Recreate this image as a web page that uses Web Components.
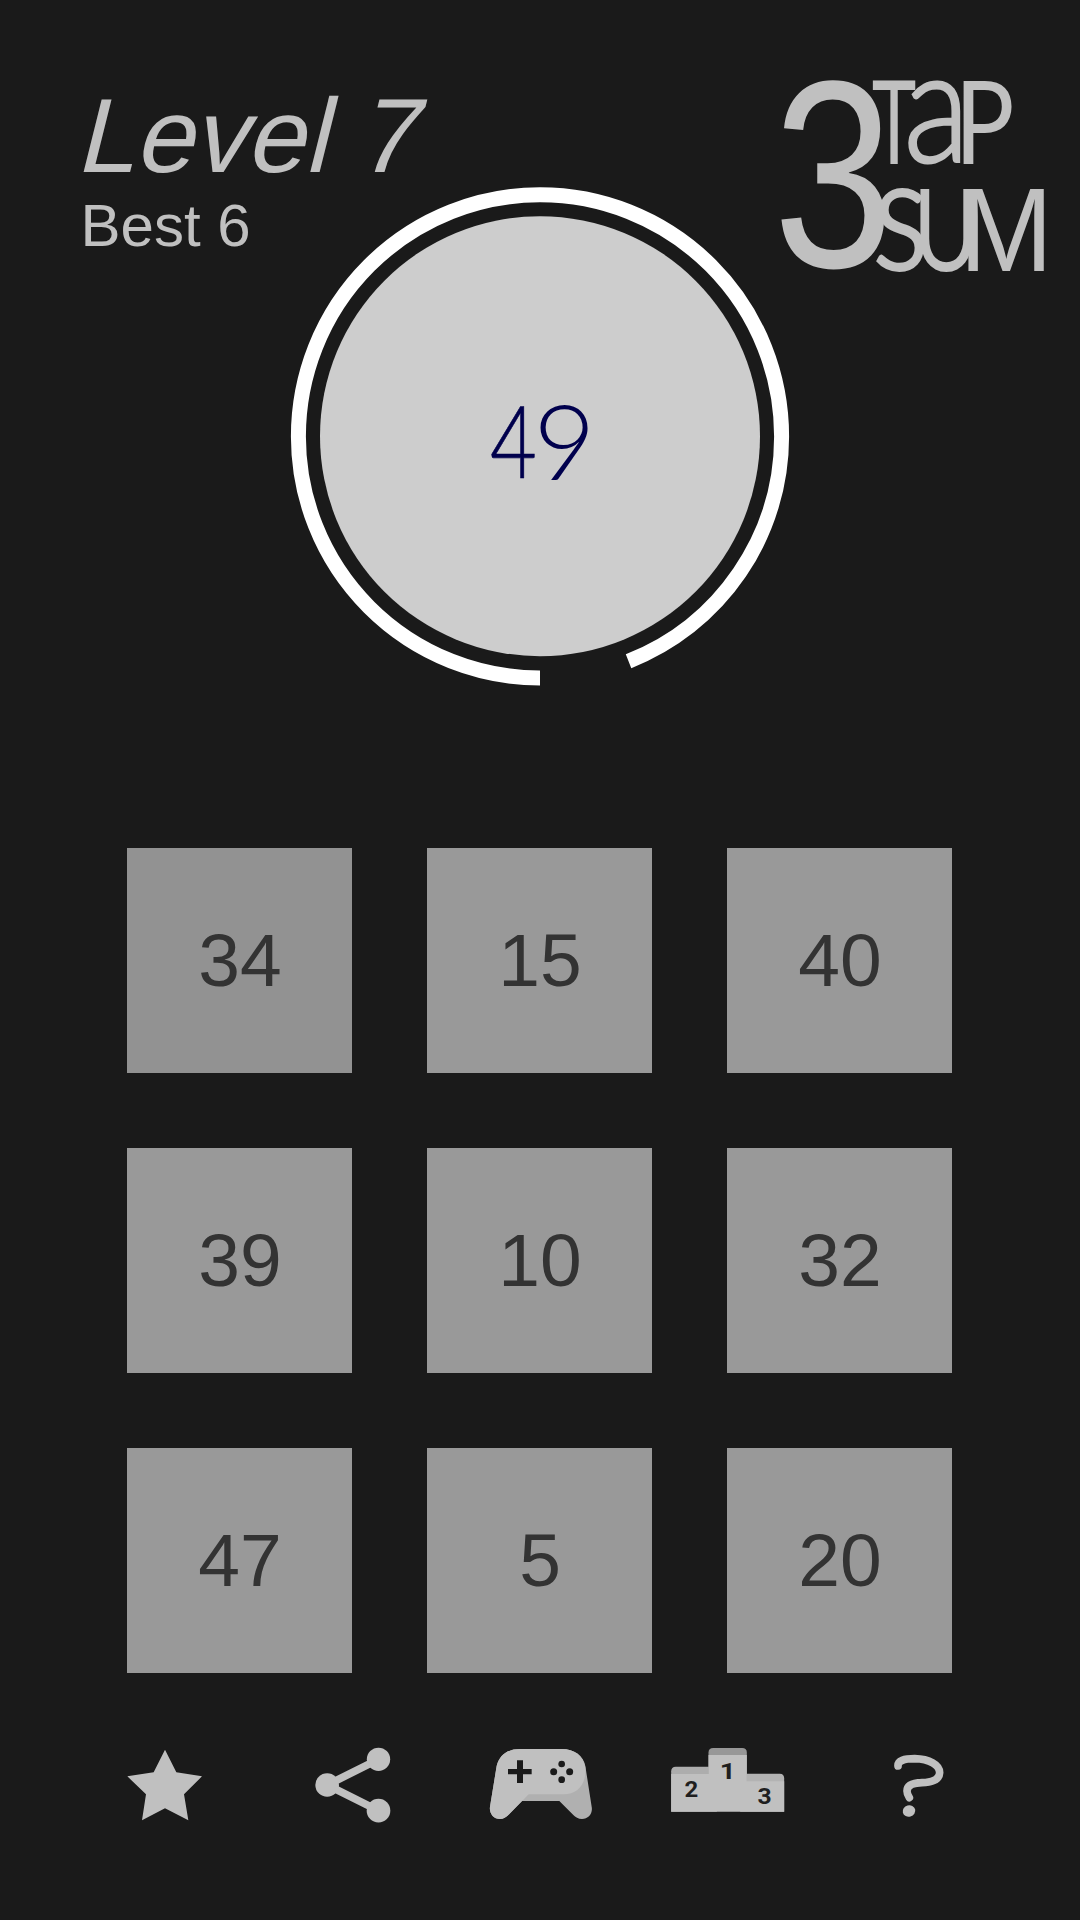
<!DOCTYPE html>
<html lang="en">
<head>
<meta charset="utf-8">
<title>3 Tap Sum</title>
<style>
    body {
        margin: 0;
        background: #1a1a1a;
        color: #c0c0c0;
        font-family: "Liberation Sans", Arial, sans-serif;
    }
</style>
</head>
<body>

<tap-game>
    <level-info slot="info" level="7" best="6"></level-info>
    <target-dial slot="target" value="49" remaining="338.5"></target-dial>
    <game-logo slot="logo"></game-logo>
    <number-tile pressed>34</number-tile>
    <number-tile>15</number-tile>
    <number-tile>40</number-tile>
    <number-tile>39</number-tile>
    <number-tile>10</number-tile>
    <number-tile>32</number-tile>
    <number-tile>47</number-tile>
    <number-tile>5</number-tile>
    <number-tile>20</number-tile>
    <menu-icon slot="menu" name="star"></menu-icon>
    <menu-icon slot="menu" name="share"></menu-icon>
    <menu-icon slot="menu" name="gamepad"></menu-icon>
    <menu-icon slot="menu" name="podium"></menu-icon>
    <menu-icon slot="menu" name="help"></menu-icon>
</tap-game>

<script>

    // Scales an SVG text so that its ink fills the box "left top right bottom"
    const fitText = function (text) {
        const [left, top, right, bottom] = text.getAttribute('data-box').split(' ').map(Number);
        const context = document.createElement('canvas').getContext('2d');
        context.font = text.getAttribute('data-font');
        const ink = context.measureText(text.textContent);
        const scaleX = (right - left) / (ink.actualBoundingBoxRight + ink.actualBoundingBoxLeft);
        const scaleY = (bottom - top) / (ink.actualBoundingBoxAscent + ink.actualBoundingBoxDescent);
        const x = left + ink.actualBoundingBoxLeft * scaleX;
        const y = top + ink.actualBoundingBoxAscent * scaleY;
        text.style.font = text.getAttribute('data-font');
        text.setAttribute('transform', `translate(${x} ${y}) scale(${scaleX} ${scaleY})`);
    };

    class TapGame extends HTMLElement {

        constructor() {
            super();
            this.attachShadow({ mode: 'open' }).innerHTML = `
                <header>
                    <slot name="info"></slot>
                    <slot name="target"></slot>
                    <slot name="logo"></slot>
                </header>
                <main><slot></slot></main>
                <nav><slot name="menu"></slot></nav>

                <style>
                    :host {
                        display: flex;
                        flex-direction: column;
                        width: 1080px;
                        height: 1920px;
                    }
                    header {
                        display: grid;
                        grid-template-columns: 290px 500px 290px;
                        align-items: start;
                        height: 848px;
                    }
                    main {
                        display: grid;
                        grid-template-columns: repeat(3, 225px);
                        grid-auto-rows: 225px;
                        gap: 75px;
                        padding-left: 127px;
                    }
                    nav {
                        display: grid;
                        grid-template-columns: repeat(5, 187.5px);
                        justify-content: center;
                        justify-items: center;
                        padding-top: 57px;
                    }
                </style>
            `;
        }

    }

    class LevelInfo extends HTMLElement {

        constructor() {
            super();
            this.attachShadow({ mode: 'open' }).innerHTML = `
                <div class="level">Level <span id="level"></span></div>
                <div class="best">Best <span id="best"></span></div>

                <style>
                    :host {
                        display: block;
                        padding: 76px 0 0 75px;
                        white-space: nowrap;
                    }
                    /* Slanted upright face, sheared from its baseline */
                    .level {
                        font-size: 105.3px;
                        line-height: 120px;
                        transform: skewX(-14deg);
                        transform-origin: 0 96px;
                    }
                    .best {
                        padding-left: 5.5px;
                        font-size: 60px;
                        line-height: 60px;
                    }
                </style>
            `;
        }

        connectedCallback() {
            this.shadowRoot.querySelector('#level').textContent = this.getAttribute('level');
            this.shadowRoot.querySelector('#best').textContent = this.getAttribute('best');
        }

    }

    class TargetDial extends HTMLElement {

        constructor() {
            super();
            this.attachShadow({ mode: 'open' }).innerHTML = `
                <svg width="500" height="500" viewBox="290 186 500 500">
                    <circle cx="540" cy="436.2" r="220" fill="#cdcdcd"/>
                    <circle id="ring" cx="540" cy="436.4" r="241.6" fill="none" stroke="#fff"
                        stroke-width="15" pathLength="360" transform="rotate(90 540 436.4)"/>
                    <g fill="#00004d"><text class="digit" stroke="#00004d" stroke-width="0.6" data-font="300 100px Lato, sans-serif"
                        data-box="491.6 406.3 534.5 478.2"></text><text class="digit" data-font="300 100px Lato, sans-serif"
                        data-box="540 404.7 588.2 480"></text></g>
                </svg>

                <style>
                    :host {
                        display: block;
                        padding-top: 186px;
                    }
                    svg {
                        display: block;
                    }
                </style>
            `;
        }

        connectedCallback() {
            const value = this.getAttribute('value');
            this.shadowRoot.querySelectorAll('.digit').forEach(function (digit, i) {
                digit.textContent = value[i];
                fitText(digit);
            });
            // Ring length is in degrees, clockwise from the bottom
            this.shadowRoot.querySelector('#ring')
                .setAttribute('stroke-dasharray', this.getAttribute('remaining') + ' 360');
        }

    }

    class GameLogo extends HTMLElement {

        constructor() {
            super();
            this.attachShadow({ mode: 'open' }).innerHTML = `
                <svg width="290" height="230" viewBox="0 0 870 690" fill="#c0c0c0">
                    <text data-font="400 400px 'Liberation Sans'" data-box="30 57 345 633">3</text>
                    <text data-font="400 400px Lato" data-box="305 62 436 312">T</text>
                    <text stroke="#c0c0c0" stroke-width="7" data-font="300 400px Lato" data-box="414 61 573 312">a</text>
                    <text data-font="400 400px Lato" data-box="577 60 727 313">P</text>
                    <text data-font="400 400px Lato" data-box="318 378 463 637">S</text>
                    <text data-font="400 400px Lato" data-box="450 383 607 637">U</text>
                    <text data-font="400 400px 'Liberation Sans'" data-box="594 383 826 633">M</text>
                </svg>

                <style>
                    :host {
                        display: block;
                        margin: 60px 0 0 -20px;
                    }
                    svg {
                        display: block;
                        overflow: visible;
                    }
                </style>
            `;
        }

        connectedCallback() {
            this.shadowRoot.querySelectorAll('text').forEach(fitText);
        }

    }

    class NumberTile extends HTMLElement {

        constructor() {
            super();
            this.attachShadow({ mode: 'open' }).innerHTML = `
                <slot></slot>

                <style>
                    :host {
                        display: flex;
                        align-items: center;
                        justify-content: center;
                        box-sizing: border-box;
                        padding-left: 1px;
                        background: #999;
                        color: #333;
                        font-size: 75px;
                        line-height: 85px;
                    }
                    :host([pressed]) {
                        background: #929292;
                    }
                </style>
            `;
        }

    }

    const icons = {
        star: {
            x: -60,
            shapes: `<path d="M165 59 199 127 276 139 222 193 235 271 165 235 96 271 108 193 52 139 131 127Z"/>`
        },
        share: {
            x: 502.5,
            shapes: `
                <path d="M804 88 650 165 804 242" fill="none" stroke="#c0c0c0" stroke-width="23"/>
                <circle cx="804" cy="88" r="35"/>
                <circle cx="650" cy="165" r="35.5"/>
                <circle cx="804" cy="242" r="35.5"/>
            `
        },
        gamepad: {
            x: -15,
            shapes: `
                <path fill="#b0b0b0" d="M150 57H275C313 57 340 77 346 108L365 230C369 250 355 267 336 267
                    C325 267 316 262 310 255L268 213H156L118 252C108 262 100 267 90 267C70 267 57 250 60 230
                    L80 108C88 76 112 57 150 57Z"/>
                <path d="M150 57H275C313 57 340 77 346 112C350 160 325 193 280 193H176L118 252
                    C108 262 100 267 90 267C70 267 57 250 60 230L80 108C88 76 112 57 150 57Z"/>
                <path fill="#1a1a1a" d="M141 91H159V117H185V133H159V159H141V133H114V117H141Z"/>
                <g fill="#1a1a1a">
                    <circle cx="275" cy="102" r="10"/>
                    <circle cx="251" cy="125" r="10.5"/>
                    <circle cx="299" cy="125" r="10.5"/>
                    <circle cx="275" cy="149" r="10"/>
                </g>
            `
        },
        podium: {
            x: 8.5,
            shapes: `
                <path fill="#adadad" d="M63 245V124Q63 110 77 110H200V245Z"/>
                <path fill="#b3b3b3" d="M270 245V131H389Q402 131 402 145V245Z"/>
                <path fill="#979797" d="M175 200V68Q175 54 189 54H276Q290 54 290 68V200Z"/>
                <path d="M63 132H175V75H290V154H402V245H63Z"/>
                <g fill="#1f1f1f">
                    <text data-font="700 68px Roboto" data-box="105 153 142 202">2</text>
                    <text data-font="700 68px Roboto" data-box="215 98 242 147">1</text>
                    <text data-font="700 68px Roboto" data-box="324 174 361 224">3</text>
                </g>
            `
        },
        help: {
            x: -90,
            shapes: `
                <path d="M84 108C83 92 102 86 134 86C178 87 209 104 209 128C208 149 186 157 156 158
                    C127 159 111 166 111 183C111 192 114 197 118 203"
                    fill="none" stroke="#c0c0c0" stroke-width="23" stroke-linecap="round"/>
                <ellipse cx="117" cy="243" rx="19" ry="17" transform="rotate(-15 117 243)"/>
            `
        }
    };

    class MenuIcon extends HTMLElement {

        constructor() {
            super();
            this.attachShadow({ mode: 'open' });
        }

        connectedCallback() {
            const icon = icons[this.getAttribute('name')];
            this.shadowRoot.innerHTML = `
                <svg width="150" height="110" viewBox="${icon.x} 0 450 330" fill="#c0c0c0">${icon.shapes}</svg>

                <style>
                    :host {
                        display: block;
                    }
                    svg {
                        display: block;
                    }
                </style>
            `;
            this.shadowRoot.querySelectorAll('text').forEach(fitText);
        }

    }

    customElements.define('level-info', LevelInfo);
    customElements.define('target-dial', TargetDial);
    customElements.define('game-logo', GameLogo);
    customElements.define('number-tile', NumberTile);
    customElements.define('menu-icon', MenuIcon);
    customElements.define('tap-game', TapGame);

</script>
</body>
</html>
